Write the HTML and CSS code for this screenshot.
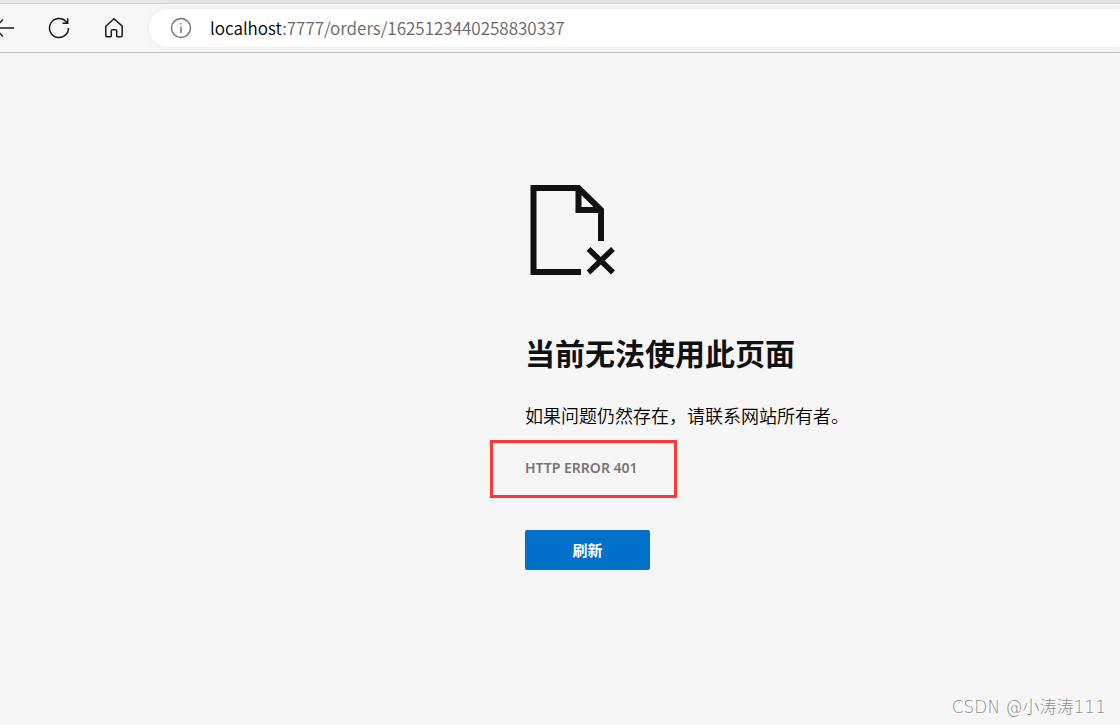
FILE: index.html
```html
<!DOCTYPE html>
<html lang="zh-CN">
<head>
<meta charset="utf-8">
<title>localhost</title>
<link rel="stylesheet" href="styles.css">
</head>
<body>
<header class="toolbar">
  <nav class="nav-buttons">
    <button class="icon-button" type="button" aria-label="返回">
      <svg width="24" height="24" viewBox="0 0 24 24"><path d="M22 12H3M11 3.500L2.500 12l8.500 8.500"/></svg>
    </button>
    <button class="icon-button" type="button" aria-label="刷新页面">
      <svg width="24" height="24" viewBox="0 0 24 24"><path d="M21.500 12A9.500 9.500 0 1 1 19 5.600L20.500 7M20.700 2.300V7.200H15.500"/></svg>
    </button>
    <button class="icon-button" type="button" aria-label="主页">
      <svg width="24" height="24" viewBox="0 0 24 24"><path d="M3.800 10.200L12 2.700l8.200 7.500V19.500a1.300 1.300 0 0 1-1.300 1.300H15.500a.8.800 0 0 1-.8-.8V14.800a1 1 0 0 0-1-1H10.300a1 1 0 0 0-1 1V20a.8.800 0 0 1-.8.800H5.100a1.300 1.300 0 0 1-1.300-1.300Z"/></svg>
    </button>
  </nav>
  <div class="address">
    <svg class="info" width="22" height="22" viewBox="0 0 22 22"><circle cx="11" cy="11" r="9.500"/><path d="M11 9.500V16M11 6v1.500"/></svg>
    <span class="url"><span class="host">localhost</span>:7777/orders/1625123440258830337</span>
  </div>
</header>
<main class="page">
  <section class="error">
    <svg class="error-icon" width="90" height="92" viewBox="0 0 90 92">
      <path d="M56 88H8.500V4H53.500L76 26V57M53.500 4V26H76"/>
      <path class="cross" d="M63.500 65L88 88.500M88 65L63.500 88.500"/>
    </svg>
    <h1 class="title">当前无法使用此页面</h1>
    <p class="summary">如果问题仍然存在，请联系网站所有者。</p>
    <p class="code">HTTP ERROR 401</p>
    <button class="reload" type="button">刷新</button>
  </section>
</main>
<footer class="watermark">CSDN @小涛涛111</footer>
</body>
</html>
```
FILE: styles.css
```css
* { box-sizing: border-box; }
body {
  margin: 0;
  min-height: 100vh;
  display: flex;
  flex-direction: column;
  background: #f6f6f6;
  color: #111;
  font-family: "Noto Sans", "Noto Sans CJK SC", sans-serif;
}
.toolbar {
  display: flex;
  align-items: center;
  height: 53px;
  border-top: 3px solid #e6e6e6;
  border-bottom: 1px solid #bdbdbd;
  background: #f7f7f7;
  box-shadow: inset 0 1px #d6d6d6;
}
.nav-buttons {
  display: flex;
  gap: 31px;
  margin-left: -8px;
}
.icon-button {
  display: block;
  width: 24px;
  height: 24px;
  padding: 0;
  border: 0;
  background: none;
}
.icon-button svg {
  display: block;
  fill: none;
  stroke: #1b1b1b;
  stroke-width: 1.5;
}
.address {
  flex: 1;
  display: flex;
  align-items: center;
  gap: 18px;
  height: 38px;
  margin-left: 23px;
  padding-left: 21px;
  border-radius: 19px 0 0 19px;
  background: #fff;
  box-shadow: 0 0 5px #e6e6e6;
}
.info {
  fill: none;
  stroke: #707070;
  stroke-width: 1.4;
}
.url {
  color: #666;
  font-family: "Noto Sans CJK SC", sans-serif;
  font-size: 17px;
  font-weight: 350;
  line-height: 24px;
}
.host { color: #000; }
.page {
  flex: 1;
  padding: 131px 0 0 46.875%;
}
.error {
  display: flex;
  flex-direction: column;
  align-items: flex-start;
}
.error-icon {
  fill: none;
  stroke: #111;
  stroke-width: 6;
}
.cross { stroke-width: 5.5; }
.title {
  margin: 56px 0 0;
  font-size: 30px;
  line-height: 44px;
  font-weight: 700;
}
.summary {
  margin: 26px 0 0;
  font-size: 18px;
  font-weight: 350;
  line-height: 28px;
  color: #000;
}
.code {
  position: relative;
  margin: 28px 0 0;
  color: #757575;
  font-size: 14px;
  font-weight: 600;
  line-height: 20px;
}
.code::before {
  content: "";
  position: absolute;
  inset: -18px -39px -20px -35px;
  border: 3px solid #fb3838;
}
.reload {
  min-width: 125px;
  height: 40px;
  margin: 52px 0 0;
  padding: 0 16px;
  border: 0;
  border-radius: 2px;
  background: #0070c9;
  color: #fff;
  font: 700 15px/20px "Noto Sans CJK SC", sans-serif;
}
.watermark {
  padding: 0 14px 6px;
  color: #909090;
  font-family: "DejaVu Sans", "Noto Sans CJK SC", sans-serif;
  font-size: 17px;
  font-weight: 300;
  line-height: 24px;
  text-align: right;
  text-shadow: 1px 1px #fff;
}
```
